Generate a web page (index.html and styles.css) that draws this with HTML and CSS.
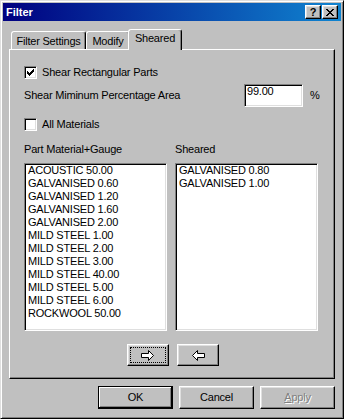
FILE: index.html
```html
<!DOCTYPE html>
<html lang="en">
<head>
    <meta charset="UTF-8">
    <title>Filter</title>
    <link rel="stylesheet" href="styles.css">
</head>
<body>
    <div class="window">
        <div class="titlebar">
            <span class="title">Filter</span>
            <div class="title-buttons">
                <div class="tbtn help">?</div>
                <div class="tbtn close">
                    <svg width="8" height="7" shape-rendering="crispEdges"><path d="M0 0h2v1h-2z M6 0h2v1h-2z M1 1h2v1h-2z M5 1h2v1h-2z M2 2h4v1h-4z M3 3h2v1h-2z M2 4h4v1h-4z M1 5h2v1h-2z M5 5h2v1h-2z M0 6h2v1h-2z M6 6h2v1h-2z"/></svg>
                </div>
            </div>
        </div>

        <div class="dialog-body">
            <div class="tabs">
                <div class="tab tab-settings">Filter Settings</div>
                <div class="tab tab-modify">Modify</div>
                <div class="tab tab-sheared active">Sheared</div>
            </div>

            <div class="panel">
                <div class="check-row">
                    <span class="checkbox">
                        <svg width="7" height="7" shape-rendering="crispEdges"><path d="M0 2h1v3h-1z M1 3h1v3h-1z M2 4h1v3h-1z M3 3h1v3h-1z M4 2h1v3h-1z M5 1h1v3h-1z M6 0h1v3h-1z"/></svg>
                    </span>
                    Shear Rectangular Parts
                </div>

                <div class="field-row">
                    <span class="field-label">Shear Miminum Percentage Area</span>
                    <span class="input">99.00</span>
                    <span class="unit">%</span>
                </div>

                <div class="check-row second">
                    <span class="checkbox"></span>
                    All Materials
                </div>

                <div class="lists">
                    <div class="list-col">
                        <div class="list-label">Part Material+Gauge</div>
                        <div class="listbox">
                            <div>ACOUSTIC 50.00</div>
                            <div>GALVANISED 0.60</div>
                            <div>GALVANISED 1.20</div>
                            <div>GALVANISED 1.60</div>
                            <div>GALVANISED 2.00</div>
                            <div>MILD STEEL 1.00</div>
                            <div>MILD STEEL 2.00</div>
                            <div>MILD STEEL 3.00</div>
                            <div>MILD STEEL 40.00</div>
                            <div>MILD STEEL 5.00</div>
                            <div>MILD STEEL 6.00</div>
                            <div>ROCKWOOL 50.00</div>
                        </div>
                    </div>
                    <div class="list-col">
                        <div class="list-label">Sheared</div>
                        <div class="listbox">
                            <div>GALVANISED 0.80</div>
                            <div>GALVANISED 1.00</div>
                        </div>
                    </div>
                </div>

                <div class="move-buttons">
                    <div class="btn move focused">
                        <svg width="14" height="11"><polygon points="0.5,3.5 7.5,3.5 7.5,0.5 12.5,5.5 7.5,10.5 7.5,7.5 0.5,7.5" fill="#fff" stroke="#000" stroke-width="1"/></svg>
                    </div>
                    <div class="btn move">
                        <svg width="14" height="11"><polygon points="13.5,3.5 6.5,3.5 6.5,0.5 1.5,5.5 6.5,10.5 6.5,7.5 13.5,7.5" fill="#fff" stroke="#000" stroke-width="1"/></svg>
                    </div>
                </div>
            </div>

            <div class="actions">
                <div class="btn action default">OK</div>
                <div class="btn action">Cancel</div>
                <div class="btn action disabled"><u>A</u>pply</div>
            </div>
        </div>
    </div>
</body>
</html>
```

FILE: styles.css
```css
* {
    margin: 0;
    padding: 0;
    box-sizing: border-box;
}

body {
    font-family: "Liberation Sans", Arial, sans-serif;
    font-size: 11px;
    letter-spacing: -0.2px;
    color: #000;
    background: #c0c0c0;
}

.window {
    width: 344px;
    height: 419px;
    background: #c0c0c0;
    border: 1px solid;
    border-color: #dfdfdf #000 #000 #dfdfdf;
    box-shadow: inset 1px 1px #fff, inset -1px -1px #808080;
    padding: 2px;
    display: flex;
    flex-direction: column;
}

/* title bar */
.titlebar {
    height: 18px;
    background: linear-gradient(to right, #000080, #1084d0);
    color: #fff;
    display: flex;
    align-items: center;
    justify-content: space-between;
    padding: 0 3px 0 3px;
}

.title {
    font-weight: bold;
    letter-spacing: 0;
}

.title-buttons {
    display: flex;
    gap: 1px;
}

.tbtn {
    width: 16px;
    height: 14px;
    background: #c0c0c0;
    color: #000;
    border: 1px solid;
    border-color: #fff #000 #000 #fff;
    box-shadow: inset -1px -1px #808080, inset 1px 1px #dfdfdf;
    display: flex;
    align-items: center;
    justify-content: center;
    font-weight: bold;
    font-size: 11px;
    line-height: 12px;
    letter-spacing: 0;
}

/* dialog body */
.dialog-body {
    flex: 1;
    padding: 8px 6px 0;
    display: flex;
    flex-direction: column;
}

.tabs {
    display: flex;
    align-items: flex-end;
    height: 20px;
    padding-left: 2px;
    z-index: 1;
}

.tab {
    height: 18px;
    border: 1px solid;
    border-bottom: none;
    border-color: #fff #000 transparent #fff;
    border-radius: 3px 3px 0 0;
    box-shadow: inset -1px 0 #808080;
    background: #c0c0c0;
    text-align: center;
    line-height: 13px;
    padding-top: 3px;
}

.tab-settings { width: 75px; }
.tab-modify { width: 44px; }

.tab.active {
    width: 54px;
    height: 21px;
    margin: 0 -2px -1px;
    padding-top: 2px;
    z-index: 2;
}

.panel {
    border: 1px solid;
    border-color: #fff #000 #000 #fff;
    box-shadow: inset -1px -1px #808080;
    padding: 16px 14px 12px;
    display: flex;
    flex-direction: column;
}

.check-row {
    height: 13px;
    display: flex;
    align-items: center;
    line-height: 13px;
}

.check-row.second {
    margin-top: 11px;
}

.checkbox {
    width: 13px;
    height: 13px;
    margin-right: 5px;
    background: #fff;
    border: 1px solid;
    border-color: #808080 #fff #fff #808080;
    box-shadow: inset 1px 1px #000, inset -1px -1px #dfdfdf;
    padding: 2px;
    display: flex;
}

.field-row {
    margin-top: 5px;
    height: 23px;
    display: flex;
    align-items: center;
    line-height: 13px;
}

.field-label {
    width: 220px;
}

.input {
    width: 59px;
    height: 23px;
    align-self: stretch;
    background: #fff;
    border: 1px solid;
    border-color: #808080 #fff #fff #808080;
    box-shadow: inset 1px 1px #000, inset -1px -1px #dfdfdf;
    padding: 0 2px;
    line-height: 13px;
}

.unit {
    margin-left: 7px;
}

/* lists */
.lists {
    margin-top: 12px;
    display: flex;
    gap: 8px;
}

.list-col {
    width: 143px;
}

.list-label {
    line-height: 13px;
    margin-bottom: 7px;
}

.listbox {
    height: 168px;
    background: #fff;
    border: 1px solid;
    border-color: #808080 #fff #fff #808080;
    box-shadow: inset 1px 1px #000, inset -1px -1px #dfdfdf;
    padding: 0 3px;
    line-height: 13px;
}

/* buttons */
.btn {
    background: #c0c0c0;
    border: 1px solid;
    border-color: #fff #000 #000 #fff;
    box-shadow: inset -1px -1px #808080, inset 1px 1px #dfdfdf;
    display: flex;
    align-items: center;
    justify-content: center;
}

.move-buttons {
    margin-top: 13px;
    margin-left: 103px;
    display: flex;
    gap: 8px;
}

.btn.move {
    width: 42px;
    height: 22px;
}

.btn.focused {
    outline: 1px dotted #000;
    outline-offset: -4px;
}

.actions {
    margin-top: 7px;
    display: flex;
    justify-content: flex-end;
    gap: 6px;
}

.btn.action {
    width: 75px;
    height: 23px;
    line-height: 13px;
}

.btn.default {
    border-color: #000;
    box-shadow: inset -1px -1px #000, inset 1px 1px #fff, inset -2px -2px #808080;
}

.btn.disabled {
    color: #808080;
    text-shadow: 1px 1px #fff;
}
```
